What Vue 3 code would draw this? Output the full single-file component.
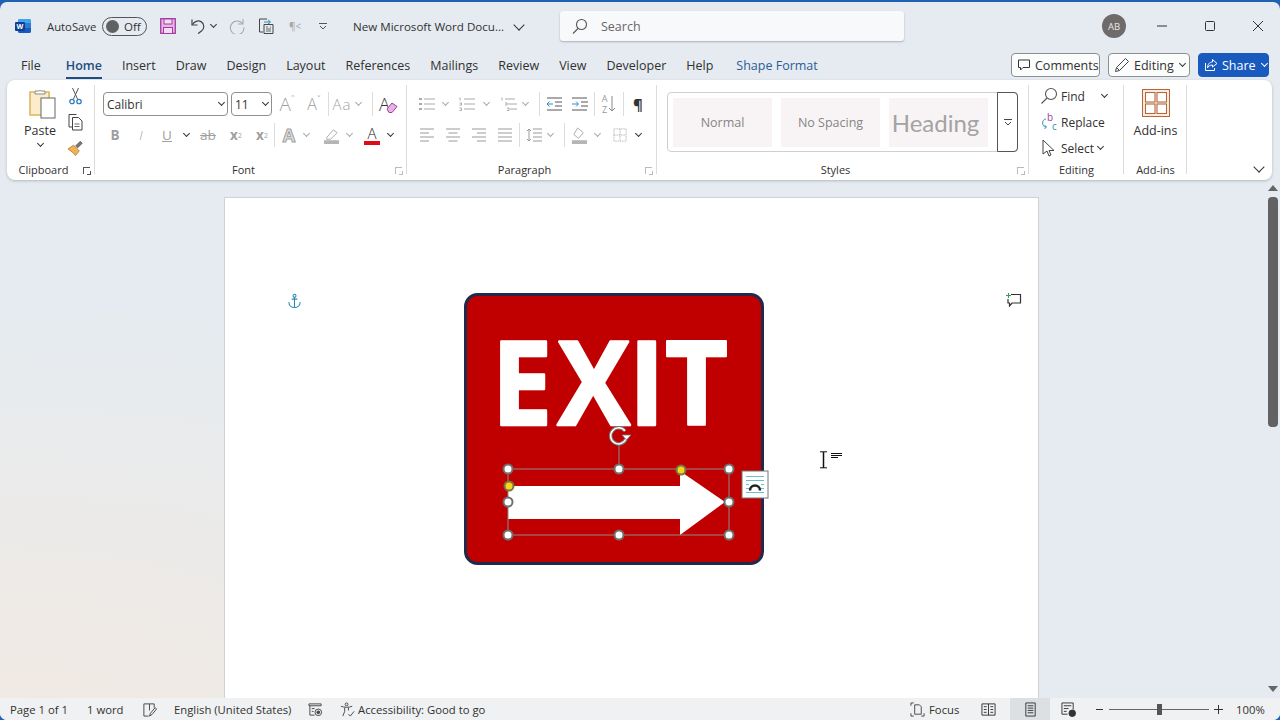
<template>
  <div class="window">
    <div class="shell">
      <!-- title bar -->
      <header class="titlebar">
        <svg class="word" viewBox="0 0 16 16">
          <rect x="3" y="1" width="13" height="14" rx="2" fill="#2b7cd3" />
          <path d="M3 3a2 2 0 0 1 2-2h9a2 2 0 0 1 2 2v2H3z" fill="#41a5ee" />
          <path d="M3 10h13v3a2 2 0 0 1-2 2H5a2 2 0 0 1-2-2z" fill="#185abd" />
          <rect x="0" y="4" width="10" height="9" rx="1" fill="#103f91" />
          <text x="5" y="11" class="word-w">W</text>
        </svg>
        <span class="autosave">AutoSave</span>
        <div class="toggle"><i></i><span>Off</span></div>
        <svg class="ti t-save" viewBox="0 0 16 16">
          <rect x=".7" y=".7" width="14.600" height="14.600" fill="#e8b4e6" stroke="#a23ea0" stroke-width="1.300" />
          <rect x="4" y="1" width="8" height="5" fill="#f5dcf3" stroke="#a23ea0" />
          <rect x="3.500" y="9.500" width="9" height="6" fill="#f5dcf3" stroke="#a23ea0" />
        </svg>
        <svg class="ti t-undo" viewBox="0 0 16 16" fill="none" stroke="#444" stroke-width="1.200">
          <path d="M2 1.500v5.500h5.500" />
          <path d="M2.300 6.800C4 3.600 8 2 11 3.600c3.600 2 3.600 7 .5 9.400l-3.400 2.600" />
        </svg>
        <span class="cv dk t-undo-cv"></span>
        <svg class="ti t-redo" viewBox="0 0 16 16" fill="none" stroke="#a9a9a9" stroke-width="1.100">
          <path d="M14 1v5h-5" />
          <path d="M13.800 6A6.800 6.800 0 1 0 15 9.500" />
        </svg>
        <svg class="ti t-doc" viewBox="0 0 16 16" fill="none" stroke="#444">
          <path d="M9 1H1.500v13H5" />
          <path d="M6 6.500h9v9H6z" />
          <path d="M8 9h2M8 11h5M8 13h5M12 9h1" stroke-width=".8" />
          <path d="M6 4h6M10 1.800 12.500 4 10 6" stroke="#2f8fb0" />
        </svg>
        <span class="t-para">¶&lt;</span>
        <svg class="t-cust" viewBox="0 0 8 7" fill="none" stroke="#555">
          <path d="M0 .5h8M1 3l3 3 3-3" />
        </svg>
        <span class="doc-title">New Microsoft Word Docu...</span>
        <span class="cv dk big t-title-cv"></span>
        <div class="search">
          <svg viewBox="0 0 16 16" fill="none" stroke="#555" stroke-width="1.100">
            <circle cx="9.500" cy="6.500" r="5" />
            <path d="M6 10.500 1 15.500" />
          </svg>
          <span>Search</span>
        </div>
        <div class="avatar">AB</div>
        <svg class="win w-min" viewBox="0 0 12 12" fill="none" stroke="#333"><path d="M1 6h10" /></svg>
        <svg class="win w-max" viewBox="0 0 12 12" fill="none" stroke="#333"><rect x="1.500" y="1.500" width="9" height="9" rx="1" /></svg>
        <svg class="win w-close" viewBox="0 0 12 12" fill="none" stroke="#333"><path d="M1 1l10 10M11 1 1 11" /></svg>
      </header>

      <!-- tabs -->
      <nav class="tabrow">
        <span class="tab first">File</span>
        <span class="tab home">Home</span>
        <span class="tab">Insert</span>
        <span class="tab">Draw</span>
        <span class="tab">Design</span>
        <span class="tab">Layout</span>
        <span class="tab">References</span>
        <span class="tab">Mailings</span>
        <span class="tab">Review</span>
        <span class="tab">View</span>
        <span class="tab">Developer</span>
        <span class="tab">Help</span>
        <span class="tab shape">Shape Format</span>
        <div class="tab-actions">
          <button class="act comments">
            <svg viewBox="0 0 14 14" fill="none" stroke="#333"><path d="M1.500 2h11v7.500H6L3.500 12V9.500h-2z" /></svg>
            Comments
          </button>
          <button class="act editing">
            <svg viewBox="0 0 16 16" fill="none" stroke="#444"><path d="M1.500 14.500 2.500 10.500 11.500 1.500 14.500 4.500 5.500 13.500zM2.500 10.500l3 3" /></svg>
            Editing<span class="cv dk"></span>
          </button>
          <button class="act share">
            <svg viewBox="0 0 14 14" fill="none" stroke="#fff"><path d="M8.500 1.500 13 5.500 8.500 9V7C5.500 7 4 8.500 3.500 10 3.500 6.500 5.500 4 8.500 4zM1.500 5v7.500h9V10" /></svg>
            Share<span class="cv wh"></span>
          </button>
        </div>
      </nav>

      <!-- ribbon -->
      <section class="ribbon">
        <div class="group g-clip">
          <div class="body clip-body">
            <div class="paste">
              <svg viewBox="0 0 28 31" fill="none">
                <path d="M2 4h19v23H2z" fill="#fbeccb" stroke="#e0b45f" stroke-width="1.600" />
                <path d="M7 5V3h3.500a3 3 0 0 1 3 0H17v3H7z" fill="#fff" stroke="#888" />
                <rect x="13" y="10" width="14" height="20" fill="#fff" stroke="#666" />
              </svg>
              <span>Paste</span>
              <span class="cv dk"></span>
            </div>
            <div class="clip-tools">
              <div class="tool">
                <svg viewBox="0 0 16 18" fill="none" stroke="#555">
                  <path d="M5 1l5 11M11 1 6 12" />
                  <circle cx="4.500" cy="14.500" r="2.200" stroke="#2f7fc1" stroke-width="1.300" />
                  <circle cx="11.500" cy="14.500" r="2.200" stroke="#2f7fc1" stroke-width="1.300" />
                </svg>
              </div>
              <div class="tool">
                <svg viewBox="0 0 16 18" fill="none" stroke="#444">
                  <path d="M5 14H1.500V1.500H9" />
                  <path d="M5 4.500h6l3.500 3.500v9H5z" />
                  <path d="M7 11h5M7 13.500h5" stroke-width=".8" />
                </svg>
              </div>
              <div class="tool">
                <svg viewBox="0 0 18 18" fill="none">
                  <path d="M1 10l6-4 6 6-4 5C7 14 4 12 1 10z" fill="#eeb25e" stroke="#c9842c" />
                  <path d="M9 7l5-5 2 2-5 5" fill="#777" stroke="#555" />
                </svg>
              </div>
            </div>
          </div>
          <div class="label off">Clipboard<span class="launch dk"></span></div>
        </div>

        <div class="group g-font">
          <div class="body rows">
            <div class="row tall">
              <div class="combo name"><span>Calibri</span><span class="cv dk"></span></div>
              <div class="combo size m3"><span>11</span><span class="cv dk"></span></div>
              <span class="cell glyph m3">A<sup class="caret">ˆ</sup></span>
              <span class="cell glyph small m3">A<sup class="caret">ˇ</sup></span>
              <span class="vsep m2"></span>
              <span class="cell w22 aa m2">Aa</span>
              <span class="cv"></span>
              <span class="vsep m9"></span>
              <span class="cell m2 clear">
                <span>A</span>
                <svg viewBox="0 0 12 12" fill="#e4b4e4" stroke="#a23ea0"><path d="M1 8l5-6 5 3.500-5 6H3z" /></svg>
              </span>
            </div>
            <div class="row">
              <span class="cell fmt bold">B</span>
              <span class="cell fmt ital m2">I</span>
              <span class="cell fmt under m2">U</span>
              <span class="cv dk m2"></span>
              <span class="cell fmt strike m5">ab</span>
              <span class="cell fmt bold m4">x<sub>2</sub></span>
              <span class="cell w22 fmt bold m3">x<sup>2</sup></span>
              <span class="vsep m1"></span>
              <span class="cell effect m2">A</span>
              <span class="cv"></span>
              <span class="cell m8">
                <svg class="ic18" viewBox="0 0 18 18" fill="none">
                  <path d="M4 11l7-8 4 3-7 7H4z" stroke="#aaa" />
                  <rect x="1" y="14" width="16" height="4" fill="#b5b5b5" />
                </svg>
              </span>
              <span class="cv m1"></span>
              <span class="cell fontcolor m6">A</span>
              <span class="cv dk m1"></span>
            </div>
          </div>
          <div class="label off">Font<span class="launch"></span></div>
        </div>

        <div class="group g-para">
          <div class="body rows">
            <div class="row tall">
              <span class="cell">
                <svg class="ic16" viewBox="0 0 16 14" stroke="#aaa"><path d="M5 2h11M5 7h11M5 12h11" /><path d="M0 2h3M0 7h3M0 12h3" stroke-width="2" /></svg>
              </span>
              <span class="cv m1"></span>
              <span class="cell m5">
                <svg class="ic16" viewBox="0 0 16 14" stroke="#aaa" fill="none"><path d="M5 2h11M5 7h11M5 12h11M1 .5v3M.5 6h2v2h-2M.5 11h2v2.500h-2" /></svg>
              </span>
              <span class="cv m2"></span>
              <span class="cell w20 m8">
                <svg class="ic16" viewBox="0 0 16 14" stroke="#aaa" fill="none"><path d="M4 2h10M7 7h9M9 12h7M1 .5v3M4 6h2v2H4M6 11h2v2.500H6" /></svg>
              </span>
              <span class="cv m1"></span>
              <span class="vsep m9"></span>
              <span class="cell m2">
                <svg class="ic16" viewBox="0 0 16 14" fill="none" stroke="#555"><path d="M1 1h15M9 5h7M9 9h7M1 13h15" /><path d="M1 7h6M3.500 4.500 1 7l2.500 2.500" stroke="#2f8fd0" /></svg>
              </span>
              <span class="cell m2">
                <svg class="ic16" viewBox="0 0 16 14" fill="none" stroke="#555"><path d="M0 1h15M9 5h7M9 9h7M0 13h15" /><path d="M0 7h6M4 4.500 6.500 7 4 9.500" stroke="#2f8fd0" /></svg>
              </span>
              <span class="vsep m2"></span>
              <span class="cell m2 sort"><b>A<br />Z</b>
                <svg viewBox="0 0 8 18" fill="none" stroke="#888"><path d="M4 1v15M1 13l3 3 3-3" /></svg>
              </span>
              <span class="vsep m2"></span>
              <span class="cell pilcrow m2">¶</span>
            </div>
            <div class="row">
              <span class="cell">
                <svg class="ic16" viewBox="0 0 16 14" stroke="#9a9a9a"><path d="M1 1h14M1 5h9M1 9h14M1 13h9" /></svg>
              </span>
              <span class="cell m2">
                <svg class="ic16" viewBox="0 0 16 14" stroke="#9a9a9a"><path d="M1 1h14M3.500 5h9M1 9h14M3.500 13h9" /></svg>
              </span>
              <span class="cell m2">
                <svg class="ic16" viewBox="0 0 16 14" stroke="#9a9a9a"><path d="M1 1h14M6 5h9M1 9h14M6 13h9" /></svg>
              </span>
              <span class="cell m2">
                <svg class="ic16" viewBox="0 0 16 14" stroke="#9a9a9a"><path d="M1 1h14M1 5h14M1 9h14M1 13h14" /></svg>
              </span>
              <span class="vsep m2"></span>
              <span class="cell w22 m3">
                <svg class="ic16" viewBox="0 0 16 14" fill="none" stroke="#9a9a9a"><path d="M7 1h9M7 5h9M7 9h9M7 13h9M3 1v12M1 3l2-2 2 2M1 11l2 2 2-2" /></svg>
              </span>
              <span class="cv"></span>
              <span class="vsep m9"></span>
              <span class="cell m2">
                <svg class="ic18" viewBox="0 0 18 18" fill="none">
                  <path d="M7 1l6 5-5 6-5-4z" stroke="#aaa" />
                  <rect x="1" y="14" width="16" height="4" fill="#b5b5b5" />
                </svg>
              </span>
              <span class="cv m1"></span>
              <span class="cell m6">
                <svg class="ic16" viewBox="0 0 16 16" fill="none" stroke="#9a9a9a" stroke-dasharray="1 1"><path d="M1 1h14v14H1zM8 1v14M1 8h14" /></svg>
              </span>
              <span class="cv dk m1"></span>
            </div>
          </div>
          <div class="label off">Paragraph<span class="launch"></span></div>
        </div>

        <div class="group g-styles">
          <div class="body">
            <div class="gallery">
              <div class="style-item">Normal</div>
              <div class="style-item">No Spacing</div>
              <div class="style-item heading">Heading</div>
              <div class="gallery-more">
                <svg viewBox="0 0 8 7" fill="none" stroke="#444"><path d="M0 .5h8M1 3l3 3 3-3" /></svg>
              </div>
            </div>
          </div>
          <div class="label off">Styles<span class="launch"></span></div>
        </div>

        <div class="group g-edit">
          <div class="body edit-body">
            <div class="edit-row find">
              <svg viewBox="0 0 18 18" fill="none" stroke="#555" stroke-width="1.100"><circle cx="11" cy="7" r="5.500" /><path d="M7 11 1.500 16.500" /></svg>
              <span>Find</span>
              <span class="cv dk end"></span>
            </div>
            <div class="edit-row">
              <svg class="rep" viewBox="0 0 18 18" fill="none">
                <text class="rep-t"><tspan x="7" y="8" class="rep-b">b</tspan><tspan x="12" y="17" class="rep-c">c</tspan></text>
                <path d="M6 6C1.500 6 1.500 14 6 14M4.500 12 6.500 14 4.500 16" stroke="#2f8fb0" />
              </svg>
              <span>Replace</span>
            </div>
            <div class="edit-row">
              <svg viewBox="0 0 18 18" fill="none" stroke="#444"><path d="M3 1v14l4-3 2 5 2-1-2-4.500h5z" /></svg>
              <span>Select</span>
              <span class="cv dk"></span>
            </div>
          </div>
          <div class="label">Editing</div>
        </div>

        <div class="group g-addins">
          <div class="body addin-body">
            <svg viewBox="0 0 28 28" fill="#fdf1e7" stroke="#b5673a" stroke-width="1.100">
              <rect x=".5" y=".5" width="27" height="27" />
              <rect x="3.500" y="3.500" width="9.500" height="9.500" fill="#fff" />
              <rect x="15" y="3.500" width="9.500" height="9.500" fill="#fff" />
              <rect x="3.500" y="15" width="9.500" height="9.500" fill="#fff" />
              <rect x="15" y="15" width="9.500" height="9.500" fill="#fff" />
            </svg>
            <span>Add-ins</span>
          </div>
          <div class="label">Add-ins</div>
        </div>

        <div class="collapse"><span class="cv dk big"></span></div>
      </section>

      <!-- document -->
      <main class="workspace">
        <div class="doc-area">
          <div class="page">
            <svg class="anchor" viewBox="0 0 16 16" fill="none" stroke="#2b88b0" stroke-width="1.100">
              <circle cx="8" cy="2.500" r="1.600" />
              <path d="M8 4v11M5 6h6M2 9c0 4 3 6 6 6s6-2 6-6" />
            </svg>
            <svg class="margin-note" viewBox="0 0 16 14" fill="none" stroke="#333" stroke-width="1.200">
              <path d="M5 1.500h9.500v8.500H6l-2.500 3v-3H2V6" />
              <path d="M2.500 0v5M0 2.500h5" stroke="#3a9a5a" />
            </svg>
            <svg class="sign" viewBox="455 285 320 290">
              <rect x="465.500" y="294.500" width="297" height="269" rx="12" fill="#c00000" stroke="#1f2a4d" stroke-width="3" />
              <text transform="scale(.93 1)" x="528.600 599.500 676 715" y="425" class="exit">EXIT</text>
              <path d="M508 486H680V471L725 502 680 535V519H508z" fill="#fff" />
              <path d="M508 469H729V535H508zM619 445V469" fill="none" stroke="#8a8a8a" />
              <g fill="#fff" stroke="#6f6f6f" stroke-width="2">
                <circle cx="508" cy="469" r="4.500" />
                <circle cx="619" cy="469" r="4.500" />
                <circle cx="729" cy="469" r="4.500" />
                <circle cx="508" cy="502" r="4.500" />
                <circle cx="729" cy="502" r="4.500" />
                <circle cx="508" cy="535" r="4.500" />
                <circle cx="619" cy="535" r="4.500" />
                <circle cx="729" cy="535" r="4.500" />
              </g>
              <g fill="#f7d51d" stroke="#7a7440" stroke-width="2">
                <circle cx="681" cy="470" r="4.500" />
                <circle cx="509" cy="486" r="4.500" />
              </g>
              <path d="M625 431A8 8 0 1 0 626 439" fill="none" stroke="#777" stroke-width="3.500" />
              <path d="M625 431A8 8 0 1 0 626 439" fill="none" stroke="#fff" stroke-width="1.500" />
              <path d="M622 435h9l-4.500 5z" fill="#fff" stroke="#777" stroke-width=".8" />
              <rect x="742" y="471" width="26" height="27" fill="#fff" stroke="#777" />
              <path d="M746 476.500H764M746 480.500H764M746 484.500H749M761 484.500H764M746 488.500H749M761 488.500H764M746 492.500H764" stroke="#6bbbd2" />
              <path d="M750 490.500A5 5 0 0 1 760 490.500" fill="none" stroke="#222" stroke-width="2.500" />
            </svg>
            <svg class="cursor" viewBox="0 0 24 18" fill="none" stroke="#111">
              <path d="M1 .8h7M1 16.800h7" />
              <path d="M4.500 1v16" stroke-width="1.500" />
              <path d="M12 2.500h11M12 4.500h11M12 6.500h7" />
            </svg>
          </div>
        </div>
        <div class="scrollbar">
          <svg viewBox="0 0 10 6" fill="#666"><path d="M5 0 10 6H0z" /></svg>
          <div class="thumb"></div>
          <svg class="down" viewBox="0 0 10 6" fill="#666"><path d="M0 0H10L5 6z" /></svg>
        </div>
      </main>

      <!-- status bar -->
      <footer class="statusbar">
        <span class="s-page">Page 1 of 1</span>
        <span class="s-words">1 word</span>
        <svg class="s-ic s-proof" viewBox="0 0 16 16" fill="none" stroke="#444">
          <path d="M8 2H2v13h5M8 2l5 0v4M8 2v7" />
          <path d="M8 15l1-3 5-6 1.500 1.500-5 6z" />
        </svg>
        <span class="s-lang">English (United States)</span>
        <svg class="s-ic s-track" viewBox="0 0 16 16" fill="none" stroke="#444">
          <path d="M1 2h13v2H1zM2 4v10h5M4 7h3M4 10h2" />
          <circle cx="11" cy="11" r="3.500" />
          <circle cx="11" cy="11" r="1.500" fill="#444" />
        </svg>
        <svg class="s-ic s-access" viewBox="0 0 16 16" fill="none" stroke="#444">
          <circle cx="7" cy="2.500" r="1.500" />
          <path d="M1 4.500c3 1.500 9 1.500 12 0M5 6v4l-2 5M9 6v3M9 13l2 2 4-5" />
        </svg>
        <span class="s-a11y">Accessibility: Good to go</span>
        <svg class="s-ic s-focus" viewBox="0 0 16 16" fill="none" stroke="#444">
          <path d="M1 4V1h3M12 15h3v-3M1 12v3h3M5 3h5l2 2v8H5z" />
        </svg>
        <span class="s-focus-t">Focus</span>
        <svg class="s-ic s-read" viewBox="0 0 16 16" fill="none" stroke="#333">
          <path d="M1 2h14v12H1zM8 2v12M3 5h3M3 8h3M3 11h3M10 5h3M10 8h3M10 11h3" />
        </svg>
        <div class="s-print">
          <svg class="s-ic" viewBox="0 0 16 16" fill="none" stroke="#333">
            <path d="M3 1h10v14H3zM5 4h6M5 6.500h6M5 9h6M5 11.500h6" />
          </svg>
        </div>
        <svg class="s-ic s-web" viewBox="0 0 16 16" fill="none" stroke="#333">
          <path d="M1 1h12v7M1 1v12h6M3 4h8M3 7h5M3 10h3" />
          <circle cx="12" cy="12" r="3.500" fill="#333" />
        </svg>
        <span class="s-minus"></span>
        <div class="slider"><i></i></div>
        <span class="s-plus"></span>
        <span class="s-zoom">100%</span>
      </footer>
    </div>
  </div>
</template>

<script setup>
</script>

<style>
html,
body {
  margin: 0;
  overflow: hidden;
}
</style>

<style scoped>
.window {
  width: 1280px;
  height: 720px;
  box-sizing: border-box;
  padding-top: 2px;
  background: #1f62b3;
  color: #323130;
  font-family: "Open Sans", "Noto Sans", sans-serif;
  font-size: 12.5px;
}
.shell {
  height: 718px;
  display: flex;
  flex-direction: column;
  overflow: hidden;
  border-radius: 7px;
  background:
    radial-gradient(900px 420px at 0% 100%, #f1e9e2 0%, rgba(241, 233, 226, 0) 100%),
    #e5ebf0;
}
svg {
  display: block;
  flex: none;
}

/* shared bits */
.cv {
  width: 10px;
  height: 10px;
  flex: none;
  display: flex;
  align-items: center;
  justify-content: center;
}
.cv::before {
  content: "";
  width: 4px;
  height: 4px;
  margin-top: -3px;
  border-right: 1.2px solid #a8a8a8;
  border-bottom: 1.2px solid #a8a8a8;
  transform: rotate(45deg);
}
.cv.dk::before {
  border-color: #333;
}
.cv.wh::before {
  border-color: #fff;
}
.cv.big::before {
  width: 7px;
  height: 7px;
}
.m1 { margin-left: 1px; }
.m2 { margin-left: 2px; }
.m3 { margin-left: 3px; }
.m4 { margin-left: 4px; }
.m5 { margin-left: 5px; }
.m6 { margin-left: 6px; }
.m8 { margin-left: 8px; }
.m9 { margin-left: 9px; }

/* title bar */
.titlebar {
  height: 48px;
  flex: none;
  display: flex;
  align-items: center;
  padding-left: 15px;
}
.word {
  width: 16px;
  height: 16px;
}
.word-w {
  font-size: 7px;
  font-weight: 700;
  fill: #fff;
  text-anchor: middle;
}
.autosave {
  margin-left: 16px;
  width: 48px;
  white-space: nowrap;
  font-size: 11.300px;
}
.toggle {
  margin-left: 7px;
  width: 45px;
  height: 19px;
  box-sizing: border-box;
  border: 1px solid #555;
  border-radius: 10px;
  display: flex;
  align-items: center;
  padding-left: 3px;
  font-size: 11.500px;
}
.toggle i {
  width: 13px;
  height: 13px;
  border-radius: 50%;
  background: #616161;
}
.toggle span {
  margin-left: 5px;
}
.ti {
  width: 16px;
  height: 16px;
}
.t-save { margin-left: 13px; }
.t-undo { margin-left: 14px; }
.t-undo-cv { margin-left: 2px; }
.t-redo { margin-left: 11px; }
.t-doc { margin-left: 13px; }
.t-para {
  margin-left: 15px;
  width: 12px;
  font-size: 10px;
  color: #a6a6a6;
  white-space: nowrap;
}
.t-cust {
  margin-left: 18px;
  width: 8px;
  height: 7px;
}
.doc-title {
  margin-left: 26px;
  width: 151px;
  white-space: nowrap;
  font-size: 11.600px;
}
.t-title-cv { margin-left: 10px; }
.search {
  margin-left: 36px;
  width: 344px;
  height: 30px;
  box-sizing: border-box;
  padding-left: 12px;
  display: flex;
  align-items: center;
  gap: 13px;
  background: #f8f9fa;
  border-radius: 3px;
  box-shadow: 0 1px 2px rgba(0, 0, 0, 0.25);
  color: #666;
}
.search svg {
  width: 16px;
  height: 16px;
}
.avatar {
  margin-left: 198px;
  width: 24px;
  height: 24px;
  border-radius: 50%;
  background: #6e6b6a;
  color: #e8e8e8;
  font-size: 9.500px;
  display: flex;
  align-items: center;
  justify-content: center;
}
.win {
  width: 12px;
  height: 12px;
}
.w-min { margin-left: 30px; }
.w-max { margin-left: 36px; }
.w-close { margin-left: 36px; }

/* tabs */
.tabrow {
  height: 30px;
  flex: none;
  display: flex;
  align-items: flex-start;
  padding-left: 21px;
  gap: 20px;
  box-sizing: border-box;
}
.tab {
  height: 27px;
  line-height: 32px;
  white-space: nowrap;
  font-size: 12.500px;
}
.tab.first {
  margin-right: 5px;
}
.tab.home {
  font-weight: 600;
  color: #1f4f82;
  border-bottom: 2px solid #1f4f82;
}
.tab.shape {
  margin-left: 3px;
  color: #2b5c99;
}
.tab-actions {
  margin-left: auto;
  margin-right: 11px;
  margin-top: 3px;
  display: flex;
  gap: 8px;
}
.act {
  height: 24px;
  box-sizing: border-box;
  display: flex;
  align-items: center;
  gap: 4px;
  padding: 0 5px;
  border: 1px solid #8f8f8f;
  border-radius: 4px;
  background: #fbfcfc;
  font: inherit;
  color: #323130;
}
.comments {
  width: 89px;
}
.comments svg {
  width: 14px;
  height: 14px;
}
.editing {
  width: 82px;
}
.editing svg {
  width: 16px;
  height: 16px;
}
.share {
  width: 71px;
  background: #185abd;
  border-color: #185abd;
  color: #fff;
}
.share svg {
  width: 14px;
  height: 14px;
}

/* ribbon */
.ribbon {
  height: 100px;
  flex: none;
  margin: 0 8px 0 7px;
  display: flex;
  background: #fff;
  border-radius: 8px;
  box-shadow: 0 1px 3px rgba(0, 0, 0, 0.22);
}
.group {
  position: relative;
  flex: none;
  height: 100px;
  display: flex;
  flex-direction: column;
  box-sizing: border-box;
}
.group::after {
  content: "";
  position: absolute;
  right: 0;
  top: 5px;
  bottom: 6px;
  width: 1px;
  background: #dcdcdc;
}
.g-clip { width: 88px; }
.g-font { width: 312px; }
.g-para { width: 250px; }
.g-styles { width: 372px; }
.g-edit { width: 95px; }
.g-addins { width: 63px; }
.body {
  height: 80px;
  flex: none;
  box-sizing: border-box;
}
.label {
  position: relative;
  height: 20px;
  line-height: 20px;
  text-align: center;
  font-size: 11px;
}
.label.off {
  padding-right: 15px;
}
.launch {
  position: absolute;
  right: 5px;
  top: 7px;
  width: 6px;
  height: 6px;
  border: 1px solid #bbb;
  border-style: solid none none solid;
}
.launch::after {
  content: "";
  position: absolute;
  right: -1px;
  bottom: -1px;
  width: 3px;
  height: 3px;
  border-right: 1px solid #bbb;
  border-bottom: 1px solid #bbb;
}
.launch.dk,
.launch.dk::after {
  border-color: #555;
}
.clip-body {
  display: flex;
  padding-left: 8px;
}
.paste {
  width: 50px;
  padding-top: 8px;
  display: flex;
  flex-direction: column;
  align-items: center;
}
.paste svg {
  width: 28px;
  height: 31px;
  margin-left: 3px;
}
.paste span:first-of-type {
  margin-top: 3px;
}
.paste .cv {
  margin-top: 1px;
}
.clip-tools {
  width: 22px;
  margin-left: -1px;
  padding-top: 3px;
}
.tool {
  height: 26px;
  display: flex;
  align-items: center;
  justify-content: center;
}
.tool svg {
  width: 17px;
  height: 18px;
}

.rows {
  padding: 12px 0 0 8px;
  display: flex;
  flex-direction: column;
  gap: 8px;
}
.row {
  height: 22px;
  display: flex;
  align-items: center;
}
.row.tall {
  height: 24px;
}
.cell {
  width: 24px;
  height: 22px;
  flex: none;
  display: flex;
  align-items: center;
  justify-content: center;
  color: #9f9f9f;
}
.w22 { width: 22px; }
.w20 { width: 20px; }
.ic16 {
  width: 16px;
  height: 14px;
}
.ic18 {
  width: 17px;
  height: 17px;
}
.vsep {
  width: 1px;
  height: 24px;
  flex: none;
  background: #dcdcdc;
}
.combo {
  height: 24px;
  box-sizing: border-box;
  border: 1px solid #8f8f8f;
  border-radius: 4px;
  display: flex;
  align-items: center;
  justify-content: space-between;
  padding: 0 1px 0 3px;
  font-size: 12px;
}
.combo.name { width: 125px; }
.combo.size { width: 41px; }
.glyph {
  font-size: 19px;
  font-weight: 300;
}
.glyph.small {
  font-size: 16px;
}
.caret {
  font-size: 10px;
  line-height: 1;
  align-self: flex-start;
  margin-top: 2px;
}
.aa {
  font-size: 15px;
  font-weight: 300;
  letter-spacing: 1px;
}
.clear {
  position: relative;
  color: #333;
  font-size: 18px;
  font-weight: 300;
  justify-content: flex-start;
  padding-left: 4px;
  box-sizing: border-box;
}
.clear svg {
  position: absolute;
  left: 11px;
  top: 8px;
  width: 12px;
  height: 12px;
}
.fmt {
  font-size: 13.500px;
}
.bold {
  font-weight: 700;
}
.ital {
  font-style: italic;
  font-weight: 300;
}
.under {
  text-decoration: underline;
}
.strike {
  text-decoration: line-through;
}
.fmt sub,
.fmt sup {
  font-size: 7px;
  font-weight: 400;
}
.effect {
  font-size: 18px;
  font-weight: 700;
  color: #e2e2e2;
  -webkit-text-stroke: 1px #9f9f9f;
}
.fontcolor {
  flex-direction: column;
  font-size: 15px;
  font-weight: 300;
  line-height: 15px;
  color: #222;
}
.fontcolor::after {
  content: "";
  width: 16px;
  height: 4px;
  background: #e00b16;
}
.sort {
  gap: 1px;
}
.sort b {
  font-size: 9px;
  line-height: 11px;
  font-weight: 400;
  text-align: center;
  color: #999;
}
.sort svg {
  width: 8px;
  height: 18px;
}
.pilcrow {
  color: #333;
  font-size: 15px;
  font-weight: 700;
}

.gallery {
  margin: 12px 0 0 10px;
  width: 351px;
  height: 60px;
  box-sizing: border-box;
  border: 1px solid #cfcfcf;
  border-radius: 4px;
  padding-left: 5px;
  display: flex;
  align-items: center;
  gap: 9px;
}
.style-item {
  width: 99px;
  height: 49px;
  flex: none;
  box-sizing: border-box;
  display: flex;
  align-items: center;
  justify-content: center;
  background: #f8f4f6;
  color: #858585;
}
.style-item.heading {
  padding-right: 6px;
  font-family: Lato, "Open Sans", sans-serif;
  font-size: 24px;
  color: #a3a3a3;
}
.gallery-more {
  width: 24px;
  height: 60px;
  margin: 0 -1px 0 auto;
  box-sizing: border-box;
  border: 1px solid #555;
  border-radius: 0 4px 4px 0;
  display: flex;
  align-items: center;
  justify-content: center;
}
.gallery-more svg {
  width: 8px;
  height: 7px;
}

.edit-body {
  padding: 3px 15px 0 11px;
}
.edit-row {
  height: 26px;
  display: flex;
  align-items: center;
  font-size: 12px;
}
.edit-row svg {
  width: 18px;
  height: 18px;
  margin-right: 3px;
}
.edit-row .rep {
  overflow: visible;
}
.edit-row .cv {
  margin-left: 1px;
}
.edit-row .cv.end {
  margin-left: auto;
}
.rep-t {
  font-size: 10px;
}
.rep-b { fill: #a23ea0; }
.rep-c { fill: #2f8fb0; }

.addin-body {
  padding-top: 9px;
  display: flex;
  flex-direction: column;
  align-items: center;
  gap: 5px;
}
.addin-body svg {
  width: 28px;
  height: 28px;
}
.collapse {
  flex: 1;
  display: flex;
  justify-content: flex-end;
  align-items: flex-end;
  padding: 0 8px 7px 0;
}

/* document */
.workspace {
  flex: 1;
  min-height: 0;
  display: flex;
  overflow: hidden;
}
.doc-area {
  flex: 1;
  padding: 17px 0 0 224px;
}
.page {
  position: relative;
  width: 815px;
  height: 600px;
  box-sizing: border-box;
  background: #fff;
  border: 1px solid #cfd3d6;
}
.anchor {
  position: absolute;
  left: 62px;
  top: 95px;
  width: 15px;
  height: 16px;
}
.margin-note {
  position: absolute;
  left: 781px;
  top: 95px;
  width: 16px;
  height: 14px;
}
.sign {
  position: absolute;
  left: 230px;
  top: 87px;
  width: 320px;
  height: 290px;
}
.exit {
  font-family: "Open Sans", sans-serif;
  font-weight: 700;
  font-size: 117px;
  fill: #fff;
  stroke: #fff;
  stroke-width: 2.500;
  stroke-linejoin: round;
}
.cursor {
  position: absolute;
  left: 594px;
  top: 253px;
  width: 24px;
  height: 18px;
}
.scrollbar {
  width: 14px;
  flex: none;
  display: flex;
  flex-direction: column;
  align-items: center;
  padding-top: 5px;
  box-sizing: border-box;
}
.scrollbar svg {
  width: 10px;
  height: 6px;
}
.scrollbar .down {
  margin-top: 259px;
}
.thumb {
  width: 10px;
  height: 230px;
  margin-top: 6px;
  border-radius: 4px;
  background: #626262;
}

/* status bar */
.statusbar {
  height: 22px;
  flex: none;
  display: flex;
  align-items: center;
  padding-left: 10px;
  background: #eff1f2;
  font-size: 11.300px;
  white-space: nowrap;
}
.s-page { width: 57px; }
.s-words { margin-left: 20px; width: 36px; }
.s-ic {
  width: 15px;
  height: 15px;
}
.s-proof { margin-left: 19px; }
.s-lang { margin-left: 17px; width: 116px; }
.s-track { margin-left: 18px; }
.s-access { margin-left: 17px; }
.s-a11y { margin-left: 3px; width: 127px; }
.s-focus { margin-left: 425px; }
.s-focus-t { margin-left: 4px; width: 29px; }
.s-read { margin-left: 23px; }
.s-print {
  margin-left: 14px;
  width: 40px;
  height: 22px;
  display: flex;
  align-items: center;
  justify-content: center;
  background: #dde0e2;
}
.s-web { margin-left: 11px; }
.s-minus {
  margin-left: 20px;
  width: 7px;
  height: 1px;
  background: #333;
}
.slider {
  margin-left: 6px;
  width: 100px;
  height: 1px;
  background: #666;
  display: flex;
  align-items: center;
  justify-content: center;
}
.slider i {
  width: 5px;
  height: 11px;
  flex: none;
  background: #555;
}
.s-plus {
  margin-left: 5px;
  width: 9px;
  height: 9px;
  background:
    linear-gradient(#333, #333) center / 9px 1px no-repeat,
    linear-gradient(#333, #333) center / 1px 9px no-repeat;
}
.s-zoom { margin-left: 13px; }
</style>
